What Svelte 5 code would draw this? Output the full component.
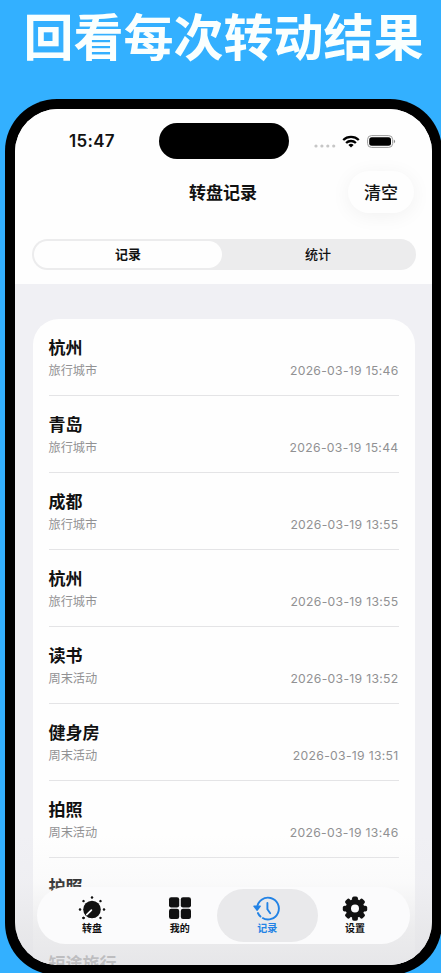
<!-- Spin history screen: a headline over a phone frame that holds the record
     list, a segmented switch and the floating tab bar. -->
<script lang="ts">
	type Tab = 'wheel' | 'mine' | 'records' | 'settings';

	const records = [
		{ result: '杭州', wheel: '旅行城市', time: '2026-03-19 15:46' },
		{ result: '青岛', wheel: '旅行城市', time: '2026-03-19 15:44' },
		{ result: '成都', wheel: '旅行城市', time: '2026-03-19 13:55' },
		{ result: '杭州', wheel: '旅行城市', time: '2026-03-19 13:55' },
		{ result: '读书', wheel: '周末活动', time: '2026-03-19 13:52' },
		{ result: '健身房', wheel: '周末活动', time: '2026-03-19 13:51' },
		{ result: '拍照', wheel: '周末活动', time: '2026-03-19 13:46' },
		{ result: '护照', wheel: '', time: '' },
		{ result: '短途旅行', wheel: '', time: '' }
	];

	const tabs: { id: Tab; label: string }[] = [
		{ id: 'wheel', label: '转盘' },
		{ id: 'mine', label: '我的' },
		{ id: 'records', label: '记录' },
		{ id: 'settings', label: '设置' }
	];

	const dots = [0, 45, 90, 135, 225, 270, 315];
	const teeth = [0, 45, 90, 135, 180, 225, 270, 315];

	let segment = $state('记录');
	let active = $state<Tab>('records');
</script>

<main>
	<h1>回看每次转动结果</h1>

	<div class="phone">
		<div class="screen">
			<header>
				<div class="status">
					<span class="clock">15:47</span>
					<span class="island"></span>
					<span class="signals">
						<svg class="dots" width="22" height="4" viewBox="0 0 22 4">
							{#each [2, 7.9, 13.8, 19.7] as cx}
								<circle {cx} cy="2" r="1.6" fill="#c6c6c6" />
							{/each}
						</svg>
						<svg width="18" height="13" viewBox="0 0 18 13" fill="none" stroke="#000" stroke-width="2.3">
							<path d="M1.2 5a11.2 11.2 0 0 1 15.6 0" />
							<path d="M4.1 8a7 7 0 0 1 9.8 0" />
							<path d="M9 12.6 6.4 9.9a3.8 3.8 0 0 1 5.2 0z" fill="#000" stroke="none" />
						</svg>
						<svg class="battery" width="29" height="13" viewBox="0 0 29 13">
							<rect x=".6" y=".6" width="25" height="11.8" rx="3.8" fill="none" stroke="#9b9b9b" />
							<rect x="2.2" y="2.2" width="21.8" height="8.6" rx="2.5" />
							<path d="M26.8 4.6q1.3.6 1.3 1.9t-1.3 1.9z" fill="#8c8c8c" />
						</svg>
					</span>
				</div>
				<div class="nav">
					<h2>转盘记录</h2>
					<button class="clear">清空</button>
				</div>
				<div class="segments">
					{#each ['记录', '统计'] as name}
						<button class:on={segment === name} onclick={() => (segment = name)}>{name}</button>
					{/each}
				</div>
			</header>

			<ul>
				{#each records as record}
					<li>
						<strong>{record.result}</strong>
						<div class="meta">
							<span>{record.wheel}</span>
							<time>{record.time}</time>
						</div>
					</li>
				{/each}
			</ul>

			<div class="fade"></div>

			<nav class="tabs">
				{#each tabs as tab}
					<button class:active={active === tab.id} onclick={() => (active = tab.id)}>
						<svg width="28" height="26" viewBox="-14 -13 28 26" fill="currentColor">
							{#if tab.id === 'wheel'}
								<circle cy=".5" r="8.8" />
								<path d="M-5.2 5.7-.6 1.1" stroke="#fbfbfc" stroke-width="1.7" stroke-linecap="round" />
								{#each dots as angle}
									<circle cy="-12" r="1.25" transform="translate(0 .5) rotate({angle})" />
								{/each}
								<circle cy="-12" r="1.25" transform="translate(0 .5) rotate(225)" />
							{:else if tab.id === 'mine'}
								<rect x="-11" y="-11.7" width="10.2" height="10.2" rx="2.2" />
								<rect x=".8" y="-11.7" width="10.2" height="10.2" rx="2.2" />
								<rect x="-11" y="-.3" width="10.2" height="10.2" rx="2.2" />
								<rect x=".8" y="-.3" width="10.2" height="10.2" rx="2.2" />
							{:else if tab.id === 'records'}
								<g fill="none" stroke="currentColor" stroke-width="1.9">
									<path d="M-9.9-1.4A10.9 10.9 0 1 1-4.8 8.8" />
									<path d="M-9.1 4a10.9 10.9 0 0 0 2.6 3.5" stroke-linecap="round" />
									<path d="M.4-6V.2L3.2 4.2" stroke-linecap="round" />
								</g>
								<path d="M-13.6-2.5q-.5-.9.5-.9h6.4q1 0 .5.9l-3.2 4.3q-.5.6-1 0z" />
							{:else}
								<path
									fill-rule="evenodd"
									d="M0-9.9a9.5 9.5 0 1 0 0 19a9.5 9.5 0 1 0 0-19zM0-4.4a4 4 0 1 1 0 8a4 4 0 1 1 0-8z"
								/>
								{#each teeth as angle}
									<rect x="-2.9" y="-12.2" width="5.8" height="5" rx="1.8" transform="translate(0 -.4) rotate({angle})" />
								{/each}
							{/if}
						</svg>
						<span>{tab.label}</span>
					</button>
				{/each}
			</nav>
		</div>
	</div>
</main>

<style>
	:global(body) {
		margin: 0;
		overflow: hidden;
	}
	main {
		box-sizing: border-box;
		width: 441px;
		height: 973px;
		overflow: hidden;
		background: #33b0ff;
		font-family: Inter, 'Noto Sans CJK SC', sans-serif;
		color: #111;
	}
	h1 {
		box-sizing: border-box;
		height: 99px;
		margin: 0;
		padding: 0 0 0 23.5px;
		font-size: 50px;
		line-height: 76px;
		font-weight: 700;
		color: #fafffe;
		white-space: nowrap;
	}
	button {
		border: 0;
		padding: 0;
		background: none;
		font: inherit;
		color: inherit;
	}
	.phone {
		box-sizing: border-box;
		width: 437px;
		height: 876px;
		margin-left: 5px;
		padding: 10px;
		border-radius: 52px;
		background: #000;
	}
	.screen {
		position: relative;
		height: 856px;
		overflow: hidden;
		border-radius: 43px;
		background: #f0f0f4;
	}
	header {
		box-sizing: border-box;
		height: 175px;
		background: #fefefe;
	}
	.status {
		display: grid;
		grid-template-columns: 143.5px 130px 1fr;
		align-items: center;
		height: 64px;
	}
	.clock {
		padding-left: 54px;
		font-size: 17px;
		font-weight: 600;
		letter-spacing: 0.3px;
	}
	.island {
		height: 36px;
		border-radius: 18px;
		background: #000;
	}
	.signals {
		display: flex;
		align-items: center;
		padding-left: 25px;
	}
	.signals svg {
		flex: none;
	}
	.dots {
		margin: 9px 6px 0 0;
	}
	.battery {
		margin-left: 7px;
	}
	.nav {
		display: grid;
		grid-template-columns: 1fr 66px;
		align-items: center;
		height: 38px;
		margin-top: -2px;
		padding: 0 18px 0 83px;
	}
	h2 {
		margin: -2px 0 0;
		font-size: 17px;
		font-weight: 700;
		text-align: center;
	}
	.clear {
		height: 42px;
		padding-bottom: 2px;
		border-radius: 21px;
		background: #fefefe;
		box-shadow: 0 3px 20px rgba(0, 0, 0, 0.055);
		font-size: 17px;
		font-weight: 500;
	}
	.segments {
		box-sizing: border-box;
		display: grid;
		grid-template-columns: 188px 1fr;
		width: 384px;
		height: 31px;
		margin: 30px 0 0 17px;
		padding: 2px;
		border-radius: 16px;
		background: #ececed;
	}
	.segments button {
		border-radius: 14px;
		font-size: 13px;
		line-height: 27px;
		font-weight: 500;
	}
	.segments .on {
		background: #fefefe;
		font-weight: 600;
	}
	ul {
		list-style: none;
		width: 382px;
		margin: 35px 0 0 17.5px;
		padding: 0;
		border-radius: 26px;
		background: #fefefe;
	}
	li {
		box-sizing: border-box;
		height: 77px;
		margin: 0 16px;
		padding-top: 17px;
		border-bottom: 1px solid #e4e4e6;
	}
	li strong {
		display: block;
		font-size: 17px;
		line-height: 25px;
		font-weight: 700;
	}
	.meta {
		display: flex;
		justify-content: space-between;
		font-size: 12.2px;
		line-height: 19px;
		color: #919193;
	}
	time {
		letter-spacing: 0.3px;
	}
	.fade {
		position: absolute;
		inset: auto 0 0;
		height: 130px;
		background: linear-gradient(
			rgba(232, 232, 234, 0),
			rgba(232, 232, 234, 0.18) 36%,
			rgba(230, 230, 232, 0.75) 72%,
			rgba(226, 226, 229, 0.84)
		);
	}
	.tabs {
		position: absolute;
		left: 22px;
		bottom: 21px;
		box-sizing: border-box;
		display: grid;
		grid-template-columns: repeat(4, 87.6px);
		justify-content: center;
		width: 373px;
		height: 57px;
		padding: 2px;
		border-radius: 29px;
		background: #fbfbfc;
	}
	.tabs button {
		display: flex;
		flex-direction: column;
		align-items: center;
		margin: 0 -7px;
		padding-top: 7px;
		border-radius: 27px;
		font-size: 10px;
		line-height: 13px;
		font-weight: 600;
	}
	.tabs .active {
		background: #e9e9eb;
		color: #2383e5;
	}
</style>
